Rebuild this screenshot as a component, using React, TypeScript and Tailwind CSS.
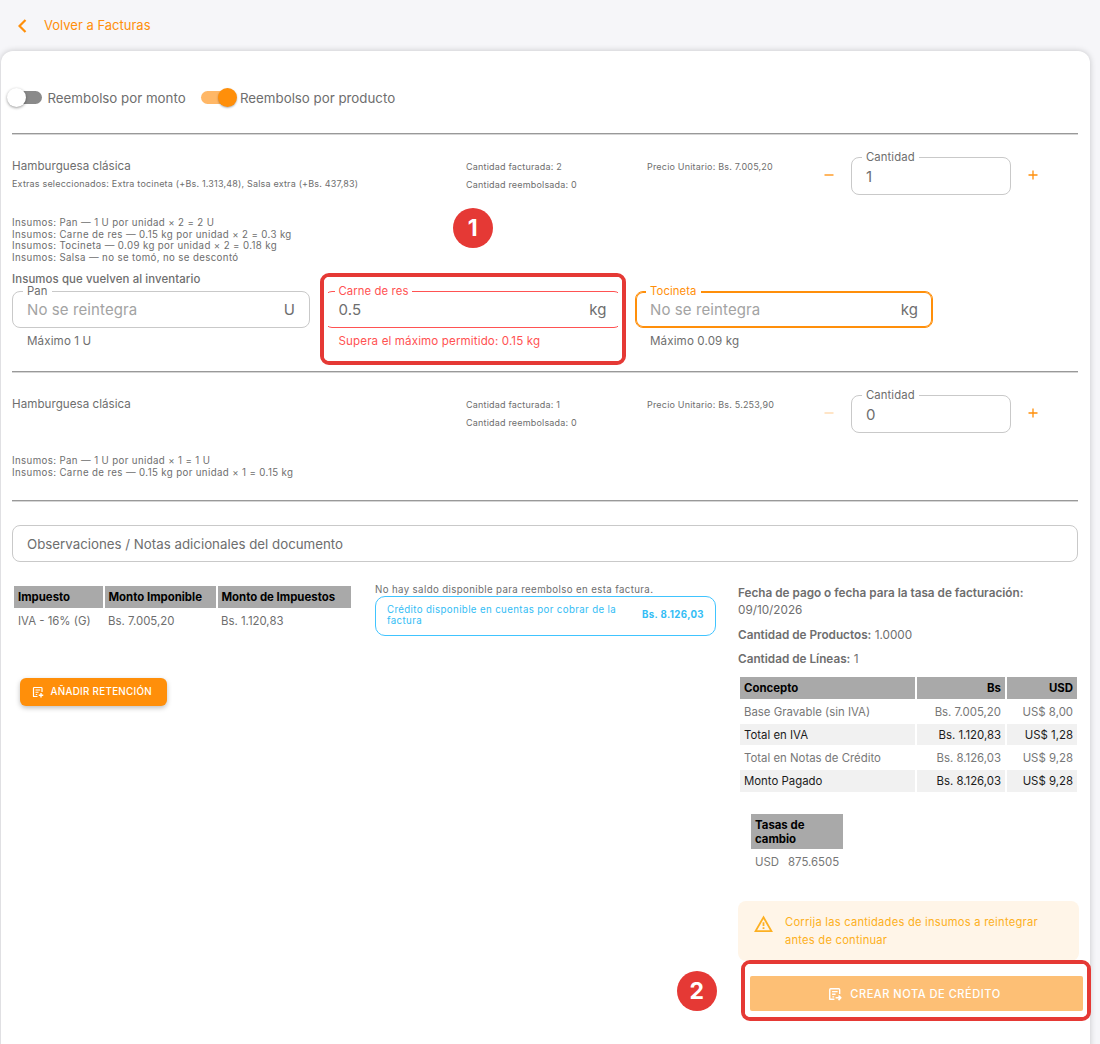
import React from "react";
import type { ReactNode } from "react";

function Rule({ className = "" }: { className?: string }) {
  return <div className={`h-[2px] shrink-0 border-t border-t-[#999] bg-[#d6d6d6] ${className}`} />;
}

function Text({ className = "", children }: { className?: string; children: ReactNode }) {
  return <div className={`whitespace-nowrap ${className}`}>{children}</div>;
}

function InvoiceIcon({ size, arrow }: { size: number; arrow?: boolean }) {
  return (
    <svg width={size} height={size} viewBox="0 0 24 24" fill="none" stroke="currentColor" strokeWidth="2.4" strokeLinejoin="round">
      <path d="M11 21H3V4.500Q3 3 4.500 3h14Q20 3 20 4.500V12" />
      <path d="M7 8h9.500M7 12.500h6M7.500 17h3" />
      {arrow ? <path strokeWidth="2.800" d="M13 18.500h8M18 14.500l4 4-4 4" /> : <path strokeWidth="2.800" d="M18 14v9M13.500 18.500h9" />}
    </svg>
  );
}

type FieldProps = {
  label: string;
  value: string;
  unit?: string;
  size: string;
  border: string;
  labelColor?: string;
  valueColor?: string;
};

function Field({ label, value, unit, size, border, labelColor = "text-[#6e6e6e]", valueColor = "text-[#6e6e6e]" }: FieldProps) {
  return (
    <div className={`relative flex items-center justify-between rounded-lg border px-[14px] pt-[1px] text-[15px] leading-[20px] tracking-[0.1px] ${size} ${border}`}>
      <span className={`absolute -top-[7px] left-[10px] bg-white px-1 text-[11.3px] leading-[12px] tracking-[0.1px] ${labelColor}`}>{label}</span>
      <span className={valueColor}>{value}</span>
      {unit && <span className="text-[#6e6e6e]">{unit}</span>}
    </div>
  );
}

function Stepper({ value, dim }: { value: string; dim?: boolean }) {
  return (
    <div className="flex items-center">
      <svg className={`-mt-[2px] ml-[0.5px] ${dim ? "opacity-35" : ""}`} width="10" height="10" viewBox="0 0 10 10" stroke="#ff8f0a" strokeWidth="1.3">
        <path d="M0.5 5h9" />
      </svg>
      <div className="ml-[17.5px] mr-[17.500px]">
        <Field label="Cantidad" value={value} size="h-[38px] w-[159.5px]" border="border-[#c9c9c9]" />
      </div>
      <svg className="-mt-[2px]" width="10" height="10" viewBox="0 0 10 10" stroke="#ff8f0a" strokeWidth="1.3">
        <path d="M0.5 5h9M5 0.5v9" />
      </svg>
    </div>
  );
}

type LineProps = { extras?: string; billed: string; price: string; qty: string; dim?: boolean };

function LineHeader({ extras, billed, price, qty, dim }: LineProps) {
  return (
    <div className="flex h-[72px]">
      <div className="w-[454px]">
        <Text className="text-[11.6px] leading-[18px] tracking-[0.04px]">Hamburguesa clásica</Text>
        {extras && <Text className="text-[9px] leading-[17px] tracking-[0.19px]">{extras}</Text>}
      </div>
      <div className="w-[181px] pt-[1px] text-[9px] leading-[18px] tracking-[0.19px]">
        <Text>Cantidad facturada: {billed}</Text>
        <Text>Cantidad reembolsada: 0</Text>
      </div>
      <div className="w-[176px] pt-[1px] text-[9px] leading-[18px] tracking-[0.19px]">
        <Text>Precio Unitario: {price}</Text>
      </div>
      <div className="h-[38px]">
        <Stepper value={qty} dim={dim} />
      </div>
    </div>
  );
}

function Supplies({ lines }: { lines: string[] }) {
  return (
    <div className="text-[9.7px] leading-[11.6px] tracking-[0.37px]">
      {lines.map((l) => (
        <Text key={l}>{l}</Text>
      ))}
    </div>
  );
}

const totals = [
  ["Base Gravable (sin IVA)", "Bs. 7.005,20", "US$ 8,00"],
  ["Total en IVA", "Bs. 1.120,83", "US$ 1,28"],
  ["Total en Notas de Crédito", "Bs. 8.126,03", "US$ 9,28"],
  ["Monto Pagado", "Bs. 8.126,03", "US$ 9,28"],
];

function Badge({ n, place }: { n: string; place: string }) {
  return (
    <div className={`absolute flex h-[39.5px] w-[39.5px] items-center justify-center rounded-full bg-[#e53935] text-[23px] font-bold text-white ${place}`}>
      {n}
    </div>
  );
}

function Frame({ place }: { place: string }) {
  return (
    <div className={`absolute rounded-[9px] border-4 border-[#e53935] ${place}`}>
      <div className="h-full w-full rounded-[5px] border-4 border-white" />
    </div>
  );
}

export default function App() {
  return (
    <div className="relative h-[1044px] w-[1100px] overflow-hidden bg-[#f6f6f9] font-['Inter',sans-serif] text-[#6e6e6e]">
      <header className="flex h-[51px] items-center pl-[18px] text-[#ff8f0a]">
        <svg width="9" height="14" viewBox="0 0 9 14" fill="none" stroke="currentColor" strokeWidth="2.2">
          <path d="M7.5 1L1.5 7l6 6" />
        </svg>
        <Text className="-mt-[2px] ml-[17px] text-[13px] leading-[20px]">Volver a Facturas</Text>
      </header>

      <main className="ml-[1px] flex h-[1010px] w-[1089px] flex-col rounded-xl bg-white pl-[11px] pr-[12px] shadow-[0_0_6px_rgba(0,0,0,0.2)]">
        <div className="mt-[33px] flex h-[28px] shrink-0 items-center text-[13.3px] leading-[20px]">
          <div className="relative -ml-[4px] -mt-px h-[13px] w-[34px] rounded-full bg-[#8a8a8a]">
            <div className="absolute -left-[1.5px] -top-[3px] h-[19px] w-[19px] rounded-full bg-white shadow-[0_1px_3px_rgba(0,0,0,0.4)]" />
          </div>
          <Text className="-mt-px ml-[5.500px] w-[153.5px]">Reembolso por monto</Text>
          <div className="relative -mt-px h-[13px] w-[35px] rounded-full bg-[#ffb766]">
            <div className="absolute -right-[0.5px] -top-[3px] h-[19px] w-[19px] rounded-full bg-[#ff8f0a] shadow-[0_1px_2px_rgba(0,0,0,0.3)]" />
          </div>
          <Text className="-mt-px ml-[4px]">Reembolso por producto</Text>
        </div>
        <Rule className="mt-[21px]" />

        <section className="flex h-[236px] shrink-0 flex-col pt-[22px]">
          <LineHeader extras="Extras seleccionados: Extra tocineta (+Bs. 1.313,48), Salsa extra (+Bs. 437,83)" billed="2" price="Bs. 7.005,20" qty="1" />
          <div className="-mt-[12px]">
            <Supplies
              lines={[
                "Insumos: Pan — 1 U por unidad × 2 = 2 U",
                "Insumos: Carne de res — 0.15 kg por unidad × 2 = 0.3 kg",
                "Insumos: Tocineta — 0.09 kg por unidad × 2 = 0.18 kg",
                "Insumos: Salsa — no se tomó, no se descontó",
              ]}
            />
          </div>
          <Text className="mt-[10.500px] text-[11.4px] font-medium leading-[11px] tracking-[0.1px]">Insumos que vuelven al inventario</Text>
          <div className="mt-[6.500px] flex gap-[13.5px] text-[11.6px] leading-[16px] tracking-[0.12px]">
            <div>
              <Field label="Pan" value="No se reintegra" unit="U" size="h-[37px] w-[298px]" border="border-[#c9c9c9]" valueColor="text-[#a3a3a3]" />
              <Text className="mt-[5px] pl-[15px]">Máximo 1 U</Text>
            </div>
            <div>
              <Field label="Carne de res" value="0.5" unit="kg" size="h-[37px] w-[298px]" border="border-[#ff5252]" labelColor="text-[#ff5252]" />
              <Text className="mt-[5px] pl-[15px] text-[#ff5252]">Supera el máximo permitido: 0.15 kg</Text>
            </div>
            <div>
              <Field
                label="Tocineta"
                value="No se reintegra"
                unit="kg"
                size="h-[37px] w-[298px]"
                border="border-[#ff8f0a] shadow-[inset_0_0_0_1px_#ff8f0a]"
                labelColor="text-[#ff8f0a]"
                valueColor="text-[#a3a3a3]"
              />
              <Text className="mt-[5px] pl-[15px]">Máximo 0.09 kg</Text>
            </div>
          </div>
        </section>
        <Rule />

        <section className="flex h-[127px] shrink-0 flex-col pt-[22px]">
          <LineHeader billed="1" price="Bs. 5.253,90" qty="0" dim />
          <div className="-mt-[12px]">
            <Supplies lines={["Insumos: Pan — 1 U por unidad × 1 = 1 U", "Insumos: Carne de res — 0.15 kg por unidad × 1 = 0.15 kg"]} />
          </div>
        </section>
        <Rule />

        <div className="mt-[23px] flex h-[37px] shrink-0 items-center rounded-lg border border-[#c9c9c9] px-[14px] pt-[2px] text-[13.3px]">
          Observaciones / Notas adicionales del documento
        </div>

        <div className="mt-[24px] flex">
          <div className="w-[363px] shrink-0 pl-[2px] text-[11.4px] leading-[16px]">
            <div className="flex gap-[2px] font-bold text-black">
              <Text className="h-[22px] w-[88.5px] bg-[#a9a9a9] px-[4px] py-[3px]">Impuesto</Text>
              <Text className="h-[22px] w-[111px] bg-[#a9a9a9] px-[4px] py-[3px]">Monto Imponible</Text>
              <Text className="h-[22px] w-[133px] bg-[#a9a9a9] px-[4px] py-[3px]">Monto de Impuestos</Text>
            </div>
            <div className="mt-[2px] flex gap-[2px]">
              <Text className="w-[88px] px-[4px] py-[3px]">IVA - 16% (G)</Text>
              <Text className="w-[111px] px-[4px] py-[3px]">Bs. 7.005,20</Text>
              <Text className="w-[133px] px-[4px] py-[3px]">Bs. 1.120,83</Text>
            </div>
            <div className="ml-[5.500px] mt-[45.500px] flex h-[28px] w-[147px] items-center rounded-md bg-[#ff8f0a] pl-[12.5px] text-[9.8px] font-medium tracking-[0.3px] text-white shadow-[0_2px_5px_rgba(0,0,0,0.25)]">
              <InvoiceIcon size={12} />
              <Text className="ml-[6.500px]">AÑADIR RETENCIÓN</Text>
            </div>
          </div>

          <div className="w-[341px] shrink-0">
            <Text className="-mt-[2px] text-[9.7px] leading-[12px] tracking-[0.37px]">No hay saldo disponible para reembolso en esta factura.</Text>
            <div className="-mt-[0.5px] flex h-[40px] items-center justify-between rounded-[10px] border border-[#40c4ff] px-[11px] text-[9.7px] leading-[11.500px] tracking-[0.37px] text-[#33bdf5]">
              <div className="-mt-[1px]">
                <Text>Crédito disponible en cuentas por cobrar de la</Text>
                <Text>factura</Text>
              </div>
              <Text className="-mt-px font-bold">Bs. 8.126,03</Text>
            </div>
          </div>

          <div className="ml-[22px] w-[341px] shrink-0 text-[11.75px] leading-[17px]">
            <Text className="mt-[-1px] font-semibold">Fecha de pago o fecha para la tasa de facturación:</Text>
            <Text>09/10/2026</Text>
            <Text className="mt-[8px]"><b className="font-semibold">Cantidad de Productos:</b> 1.0000</Text>
            <Text className="mt-[7px]"><b className="font-semibold">Cantidad de Líneas:</b> 1</Text>
            <div className="ml-[2px] mt-[9px] flex flex-col gap-[2px] text-[11.4px] leading-[16px]">
              <div className="flex gap-[2px] font-bold text-black">
                <Text className="h-[21.5px] w-[174.5px] bg-[#a9a9a9] px-[4px] py-[3px]">Concepto</Text>
                <Text className="h-[21.5px] w-[88.5px] bg-[#a9a9a9] px-[4px] py-[3px] text-right">Bs</Text>
                <Text className="h-[21.5px] w-[70px] bg-[#a9a9a9] px-[4px] py-[3px] text-right">USD</Text>
              </div>
              {totals.map(([a, b, c], i) => (
                <div key={a} className={`flex gap-[2px] ${i % 2 ? "text-[#1c1c1c]" : "text-[#777]"}`}>
                  <Text className={`h-[21.3px] w-[174.5px] px-[4px] py-[3px] ${i % 2 ? "bg-[#f1f1f1]" : ""}`}>{a}</Text>
                  <Text className={`h-[21.3px] w-[88.5px] px-[4px] py-[3px] text-right ${i % 2 ? "bg-[#f1f1f1]" : ""}`}>{b}</Text>
                  <Text className={`h-[21.3px] w-[70px] px-[4px] py-[3px] text-right ${i % 2 ? "bg-[#f1f1f1]" : ""}`}>{c}</Text>
                </div>
              ))}
            </div>
            <div className="ml-[13px] mt-[22.500px] h-[35px] w-[92px] bg-[#a9a9a9] py-[4px] pl-[4px] pr-[20px] text-[11.4px] font-bold leading-[14px] text-black">
              Tasas de cambio
            </div>
            <div className="ml-[17px] mt-[5px] flex gap-[9px] text-[11.4px] text-[#777]">
              <span>USD</span>
              <span>875.6505</span>
            </div>
            <div className="mt-[30px] flex h-[60px] rounded-lg bg-[#fff5e8] pl-[16px] pt-[13px] text-[11.2px] leading-[17.7px] tracking-[0.22px] text-[#fdb022]">
              <svg className="mt-[0.5px]" width="19" height="18" viewBox="0 0 19 18" fill="none" stroke="currentColor" strokeWidth="1.8">
                <path d="M9.500 2.200L17.400 16.100H1.600Z" />
                <path d="M9.500 7.300v3.700M9.500 12.300v1.700" />
              </svg>
              <div className="ml-[12px]">
                <Text>Corrija las cantidades de insumos a reintegrar</Text>
                <Text>antes de continuar</Text>
              </div>
            </div>
          </div>
        </div>
      </main>

      <Frame place="left-[320px] top-[273px] h-[91.5px] w-[305.5px]" />
      <Badge n="1" place="left-[453px] top-[208px]" />
      <Frame place="left-[741px] top-[960px] h-[61px] w-[350px]" />
      <div className="absolute left-[749.5px] top-[976px] flex h-[35px] w-[333px] items-center justify-center rounded-[2px] bg-[#fdbf75] pr-[3px] text-[11.1px] font-medium tracking-[0.5px] text-white">
        <InvoiceIcon size={14} arrow />
        <Text className="ml-[8px] mt-px">CREAR NOTA DE CRÉDITO</Text>
      </div>
      <Badge n="2" place="left-[677px] top-[971px]" />
    </div>
  );
}
